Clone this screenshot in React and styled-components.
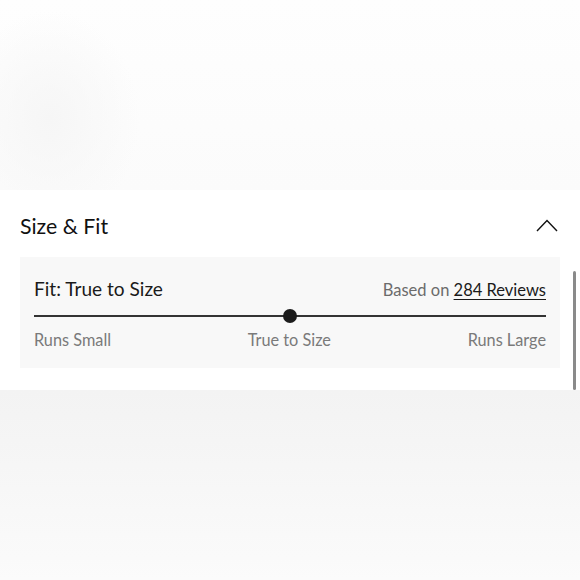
import React from "react";
import styled, { createGlobalStyle } from "styled-components";

const GlobalStyle = createGlobalStyle`
    html, body {
        margin: 0;
        padding: 0;
        background: #fcfcfc;
    }
    body {
        font-family: Lato, "Liberation Sans", sans-serif;
        color: #1a1a1a;
    }
`;

const App = () => {
    const fitPosition = 50;

    return (
        <>
            <GlobalStyle />
            <Page>
                <BlurredTop />

                <Panel>
                    <PanelHeader>
                        <PanelTitle>Size &amp; Fit</PanelTitle>
                        <ToggleButton aria-label="Collapse">
                            <svg width="22" height="13" viewBox="0 0 22 13" fill="none">
                                <polyline
                                    points="1,12 11,1.5 21,12"
                                    stroke="#111"
                                    strokeWidth="1.4"
                                />
                            </svg>
                        </ToggleButton>
                    </PanelHeader>

                    <FitCard>
                        <FitTopRow>
                            <FitTitle>Fit: True to Size</FitTitle>
                            <FitSource>
                                Based on <ReviewLink href="#">284 Reviews</ReviewLink>
                            </FitSource>
                        </FitTopRow>

                        <FitTrack>
                            <FitDot style={{ left: `${fitPosition}%` }} />
                        </FitTrack>

                        <FitLabels>
                            <FitLabel>Runs Small</FitLabel>
                            <FitLabel>True to Size</FitLabel>
                            <FitLabel>Runs Large</FitLabel>
                        </FitLabels>
                    </FitCard>

                    <ScrollThumb />
                </Panel>

                <BlurredBottom />
            </Page>
        </>
    );
};

export default App;


const Page = styled.div`
    display: flex;
    flex-direction: column;
    width: 580px;
    height: 580px;
    overflow: hidden;
`;

const BlurredTop = styled.div`
    height: 190px;
    background:
        radial-gradient(ellipse 90px 110px at 50px 120px, #f6f6f6 0%, rgba(250,250,250,0) 100%),
        linear-gradient(180deg, #fefefe 0%, #fbfbfb 100%);
`;

const Panel = styled.section`
    position: relative;
    height: 200px;
    background: #ffffff;
    padding: 0 20px;
    box-sizing: border-box;
`;

const PanelHeader = styled.div`
    display: flex;
    align-items: center;
    justify-content: space-between;
    height: 63px;
    padding-top: 4px;
`;

const PanelTitle = styled.h2`
    margin: 0;
    font-size: 21.3px;
    font-weight: 400;
    color: #111;
`;

const ToggleButton = styled.button`
    display: flex;
    align-items: center;
    border: none;
    background: none;
    padding: 0;
    margin-right: 2px;
    margin-top: -1px;
    cursor: pointer;
`;

const FitCard = styled.div`
    background: #f8f8f8;
    padding: 20px 14px 18px;
`;

const FitTopRow = styled.div`
    display: flex;
    align-items: baseline;
    justify-content: space-between;
    line-height: 24px;
`;

const FitTitle = styled.div`
    font-size: 19.1px;
    color: #1a1a1a;
`;

const FitSource = styled.div`
    font-size: 16.5px;
    color: #6b6b6b;
`;

const ReviewLink = styled.a`
    color: #1a1a1a;
    text-decoration: underline;
    text-underline-offset: 3px;
`;

const FitTrack = styled.div`
    position: relative;
    height: 14px;
    margin-top: 7px;

    &::before {
        content: "";
        position: absolute;
        left: 0;
        right: 0;
        top: 6px;
        height: 2px;
        background: #333;
    }
`;

const FitDot = styled.span`
    position: absolute;
    top: 0;
    width: 14px;
    height: 14px;
    margin-left: -7px;
    border-radius: 50%;
    background: #1c1c1c;
`;

const FitLabels = styled.div`
    display: flex;
    justify-content: space-between;
    margin-top: 7px;
    line-height: 20px;
`;

const FitLabel = styled.span`
    font-size: 16.3px;
    color: #7a7a7a;
`;

const ScrollThumb = styled.div`
    position: absolute;
    right: 4px;
    top: 81px;
    bottom: 0;
    width: 3px;
    border-radius: 2px;
    background: #8a8a8a;
`;

const BlurredBottom = styled.div`
    flex: 1;
    background: linear-gradient(180deg, #f3f3f3 0%, #f6f6f6 40%, #fbfbfb 100%);
`;
